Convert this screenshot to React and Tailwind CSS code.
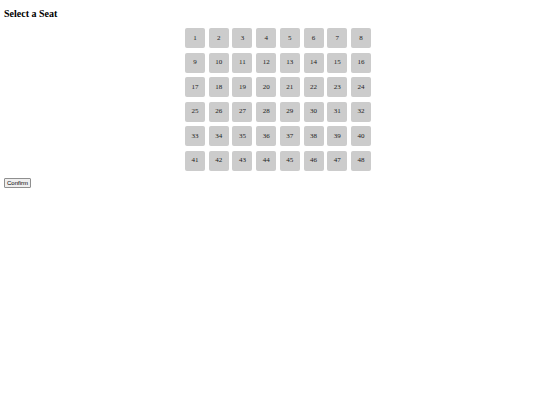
export default function App() {
  const seats = Array.from({ length: 48 }, (_, i) => i + 1);

  return (
    <div className="min-h-[405px] bg-white px-[4px] pt-[8px] text-black font-['Liberation_Serif',serif]">
      {/* Title */}
      <h2 className="text-[10px] font-bold leading-[12px]">Select a Seat</h2>

      {/* Seat grid */}
      <div className="ml-[181px] mt-[8px] grid w-[186px] grid-cols-8 gap-x-[3.7px] gap-y-[4.6px]">
        {seats.map((n) => (
          <button
            key={n}
            className="flex h-[20px] w-[20px] items-center justify-center rounded-[2px] bg-[#cccccc] text-[7px] leading-none text-[#222]"
          >
            {n}
          </button>
        ))}
      </div>

      {/* Confirm */}
      <button className="mt-[7px] block h-[10px] rounded-[1px] border border-[#8f8f8f] bg-[#efefef] px-[2px] text-[6px] leading-none font-['Liberation_Sans',sans-serif] text-black">
        Confirm
      </button>
    </div>
  );
}
